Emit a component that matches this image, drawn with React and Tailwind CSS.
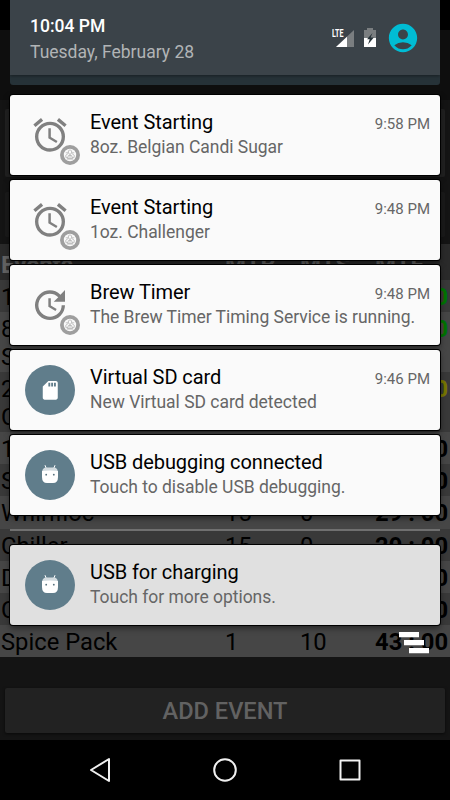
import { MdAccountCircle, MdAlarm, MdSdStorage, MdUpdate } from 'react-icons/md';

const events = [
    { name: ['10oz. Hops'], min: '60', sec: '0', time: '01 : 00', color: 'text-[#007500]' },
    { name: ['8oz. Belgian Candi', 'Sugar'], min: '5', sec: '0', time: '05 : 00', color: 'text-[#007500]' },
    { name: ['2oz. Northern', 'Cascade'], min: '15', sec: '0', time: '14 : 00', color: 'text-[#767600]' },
    { name: ['1oz. Challenger'], min: '15', sec: '0', time: '29 : 00', color: 'text-black' },
    { name: ['Sugar'], min: '15', sec: '0', time: '29 : 00', color: 'text-black' },
    { name: ['Whirlfloc'], min: '15', sec: '0', time: '29 : 00', color: 'text-black' },
    { name: ['Chiller'], min: '15', sec: '0', time: '29 : 00', color: 'text-black' },
    { name: ['DME'], min: '10', sec: '0', time: '34 : 00', color: 'text-black' },
    { name: ['Coriander'], min: '5', sec: '0', time: '39 : 00', color: 'text-black' },
    { name: ['Spice Pack'], min: '1', sec: '10', time: '43 : 00', color: 'text-black' },
];

const notifications = [
    { icon: 'alarm', title: 'Event Starting', text: '8oz. Belgian Candi Sugar', time: '9:58 PM' },
    { icon: 'alarm', title: 'Event Starting', text: '1oz. Challenger', time: '9:48 PM' },
    { icon: 'update', title: 'Brew Timer', text: 'The Brew Timer Timing Service is running.', time: '9:48 PM' },
    { icon: 'sd', title: 'Virtual SD card', text: 'New Virtual SD card detected', time: '9:46 PM' },
    { icon: 'usb', title: 'USB debugging connected', text: 'Touch to disable USB debugging.' },
];

const AndroidHead = () => (
    <svg className="mb-[2px]" width="18" height="20" viewBox="0 0 18 20" fill="#fff">
        <path d="M4 1.2L5.3 4.5M14 1.2L12.7 4.5" stroke="#fff" strokeWidth="1" />
        <path d="M1.2 7.2Q2 3.8 5 3.6H13Q16 3.8 16.8 7.2Z" fill="#d3dce0" />
        <path d="M1 7Q9 5.8 17 7V13Q17 19 12 19H6Q1 19 1 13Z" />
        <circle cx="5.2" cy="10.7" r="0.9" fill="#546e7a" />
        <circle cx="12.8" cy="10.7" r="0.9" fill="#546e7a" />
    </svg>
);

const AppBadge = () => (
    <svg className="absolute right-0 bottom-0" width="20" height="20" viewBox="0 0 20 20">
        <circle cx="10" cy="10" r="10" fill="#9e9e9e" />
        <circle cx="10" cy="10" r="6.2" fill="#fafafa" />
        <g fill="none" stroke="#b4b4b4" strokeWidth="0.8">
            <path d="M8.4 8.2V5.8L10 4.8L11.6 5.8V8.2L10 9.3ZM8.2 8.5L5.8 10.2V12.4H8.1M11.8 8.5L14.2 10.2V12.4H11.9M8.4 10.5H11.6L12.4 13.6H7.6Z" />
            <path d="M5.8 7.8H8M12 7.8H14.2M6.6 14H13.4M10 9V13" />
        </g>
    </svg>
);

const NotificationIcon = ({ icon }) => {
    if (icon === 'alarm' || icon === 'update') {
        return (
            <div className="relative flex h-[60px] w-[60px] items-center justify-center text-[#808080]">
                {icon === 'alarm' ? <MdAlarm size={40} /> : <MdUpdate size={40} />}
                <AppBadge />
            </div>
        );
    }
    return (
        <div className="m-[5px] flex h-[50px] w-[50px] items-center justify-center rounded-full bg-[#607d8b] text-white">
            {icon === 'sd' ? <MdSdStorage size={22.5} /> : <AndroidHead />}
        </div>
    );
};

const Notification = ({ icon, title, text, time, bg = 'bg-[#fafafa]' }) => (
    <div className={`flex h-20 items-center rounded-[3px] px-2.5 shadow-[0_0_0_1px_#000,0_3px_6px_rgba(0,0,0,0.5)] ${bg}`}>
        <div className="w-[70px] shrink-0">
            <NotificationIcon icon={icon} />
        </div>
        <div className="flex-1 pb-[2px] whitespace-nowrap">
            <div className="flex h-[26px] items-baseline justify-between">
                <h2 className="text-[20px] leading-[26px] tracking-[-0.07px] text-black">{title}</h2>
                {time && <span className="text-[15px] leading-[22px] text-[#666]">{time}</span>}
            </div>
            <p className="text-[17.5px] leading-[24px] tracking-[-0.03px] text-[#666]">{text}</p>
        </div>
    </div>
);

const StatusIcons = () => (
    <div className="flex items-center">
        <svg width="24" height="22" viewBox="0 0 24 22">
            <path d="M22 3V20H4Z" fill="#7a7e80" />
            <path d="M15 9.7V20H4Z" fill="#fff" />
            <text x="0" y="10" fill="#fff" fontSize="11" fontWeight="700" textLength="11.5" lengthAdjust="spacingAndGlyphs">LTE</text>
        </svg>
        <svg className="ml-[7px]" width="14" height="20" viewBox="0 0 14 20">
            <path d="M1 2H4V0H10V2H13V10H1Z" fill="#7a7e80" />
            <path d="M1 10H13V19H1Z" fill="#fff" />
            <path d="M9.5 5L4 11.2H6.7L5 16.5L10.8 9.5H7.6Z" fill="#263238" />
        </svg>
        <MdAccountCircle className="ml-[9px] text-[#00bcd4]" size={34} />
    </div>
);

const BrewApp = () => (
    <div className="flex h-[740px] flex-col overflow-hidden bg-[#141414]">
        <div className="h-[30px] shrink-0 bg-black" />
        <div className="h-[70px] shrink-0 bg-[#0e0e0e]" />
        <div className="mx-[5px] mt-[9px] h-[68px] shrink-0 rounded-[2px] bg-[#212121]" />
        <div className="mx-[5px] mt-[15px] h-[45px] shrink-0 rounded-[2px] bg-[#1a1a1a]" />
        <div className="mt-[7px] grid h-[36px] shrink-0 grid-cols-[224px_75px_75px_1fr] items-center bg-[#2a2a2a] pt-[3px] pl-px text-[24px] font-bold whitespace-nowrap text-[#626262]">
            <span>Events</span>
            <span>MTB</span>
            <span>MTS</span>
            <span>MTE</span>
        </div>
        {events.map((event, i) => (
            <div
                key={i}
                className={`grid shrink-0 grid-cols-[224px_75px_75px_1fr] pt-[3px] pl-px text-[23.75px] leading-[28px] whitespace-nowrap text-black ${event.name.length > 1 ? 'h-[60px]' : 'h-[32.125px]'} ${i % 2 ? 'bg-[#464646]' : 'bg-[#393939]'}`}
            >
                <span>
                    {event.name.map((line) => (
                        <span key={line} className="block">{line}</span>
                    ))}
                </span>
                <span>{event.min}</span>
                <span>{event.sec}</span>
                <span className={`pr-[3px] text-right font-bold ${event.color}`}>{event.time}</span>
            </div>
        ))}
        <div className="mx-[5px] mt-[31px] flex h-[45px] shrink-0 items-center justify-center rounded-[2px] bg-[#222] pt-[2px] text-[23.6px] font-medium text-[#626262] shadow-[0_1px_3px_rgba(0,0,0,0.6)]">
            ADD EVENT
        </div>
    </div>
);

const NotificationShade = () => (
    <div className="absolute inset-x-0 top-0 flex flex-col px-2.5">
        <header className="h-[85px] overflow-hidden rounded-b-[3px] bg-[#263238]">
            <div className="flex h-[75px] items-center justify-between bg-[#3b4349] pr-5 pl-5 shadow-[0_1px_3px_rgba(0,0,0,0.4)]">
                <div className="pt-[2px]">
                    <div className="text-[17.5px] leading-[26px] font-medium text-white">10:04 PM</div>
                    <div className="text-[17.5px] leading-[26px] text-[#b1b4b6]">Tuesday, February 28</div>
                </div>
                <StatusIcons />
            </div>
        </header>
        <div className="mt-2.5 flex flex-col gap-[5px]">
            {notifications.map((item, i) => (
                <Notification key={i} {...item} />
            ))}
        </div>
        <div className="mt-[14px] mb-[14px] h-[2px] bg-[#707070]" />
        <Notification icon="usb" title="USB for charging" text="Touch for more options." bg="bg-[#e0e0e0]" />
        <svg className="mt-[5px] mr-[10px] self-end" width="32" height="26" viewBox="0 0 32 26" fill="#fff">
            <path d="M1 2H21V7.3H1ZM6 10H26V15.3H6ZM11 18H31V23.3H11Z" />
        </svg>
    </div>
);

const NavigationBar = () => (
    <nav className="flex h-[60px] items-center justify-center gap-[101px] bg-black">
        <svg width="24" height="26" viewBox="0 0 24 26" fill="none" stroke="#f0f0f0" strokeWidth="2" strokeLinejoin="round">
            <path d="M21 2V24L3 13Z" />
        </svg>
        <svg width="24" height="24" viewBox="0 0 24 24" fill="none" stroke="#f0f0f0" strokeWidth="2">
            <circle cx="12" cy="12" r="10.8" />
        </svg>
        <svg width="24" height="24" viewBox="0 0 24 24" fill="none" stroke="#f0f0f0" strokeWidth="2" strokeLinejoin="round">
            <path d="M2.5 2.5H21.5V21.5H2.5Z" />
        </svg>
    </nav>
);

export default function App() {
    return (
        <div className="relative h-[800px] w-[450px] overflow-hidden bg-black font-['Roboto',sans-serif]">
            <BrewApp />
            <NavigationBar />
            <NotificationShade />
        </div>
    );
}
